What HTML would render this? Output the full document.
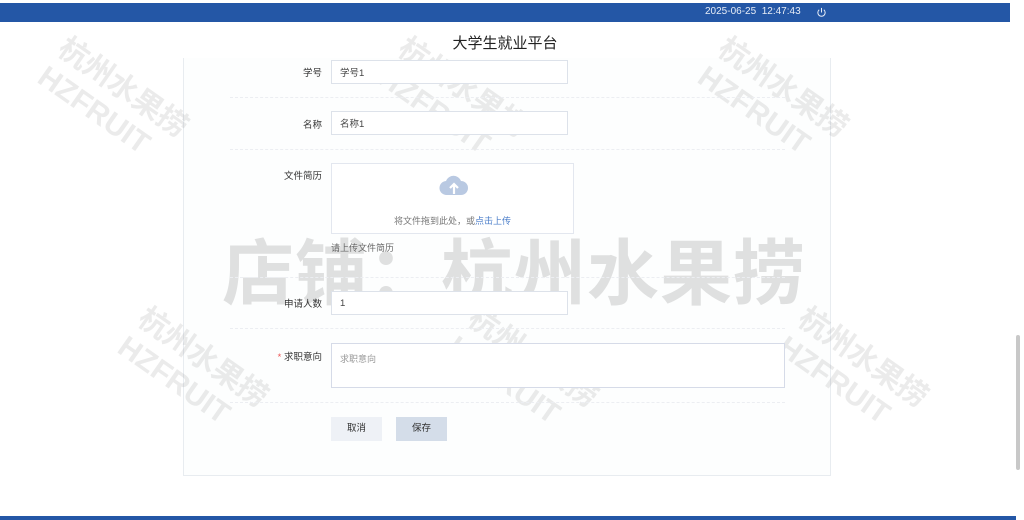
<!DOCTYPE html>
<html><head><meta charset="utf-8"><style>
*{box-sizing:border-box;margin:0;padding:0}
body{width:1024px;height:520px;overflow:hidden;background:#fff;font-family:"Liberation Sans","Noto Sans CJK SC",sans-serif;position:relative;color:#333}
.top{position:absolute;left:0;top:3px;width:1010px;height:19px;background:#2457a6}
.top span{position:absolute;top:3px;color:#e6ecf6;font-size:10px}
.title{position:absolute;top:32px;left:0;width:1010px;text-align:center;font-size:15px;color:#222}
.card{position:absolute;left:183px;top:58px;width:648px;height:418px;border:1px solid #e8ecf0;border-top:none;background:#fdfefe}
.lab{position:absolute;font-size:9.5px;color:#333;text-align:right;width:80px}
.inp{position:absolute;border:1px solid #dde2ea;background:#fff;font-size:9.5px;color:#444;padding-left:8px;display:flex;align-items:center}
.sep{position:absolute;left:230px;width:555px;border-top:1px dashed #eceef2}
.btn{position:absolute;font-size:9.5px;text-align:center;line-height:24px;width:51px;height:24px}
.wm{position:absolute;color:rgba(120,120,120,.22);font-weight:bold;white-space:nowrap}
.scroll{position:absolute;left:1016px;top:335px;width:4px;height:135px;background:#c8c8c8;border-radius:2px}
.bottom{position:absolute;left:0;top:516px;width:1016px;height:4px;background:#2457a6}
</style></head><body>
<div class="top"><span style="left:705px">2025-06-25&nbsp;&nbsp;12:47:43</span>
<svg style="position:absolute;left:816px;top:4px" width="11" height="11" viewBox="0 0 12 12"><path d="M3.5 3A4 4 0 1 0 8.5 3" fill="none" stroke="#e6ecf6" stroke-width="1.1"/><path d="M6 1v5" stroke="#e6ecf6" stroke-width="1.1"/></svg></div>
<div class="title">大学生就业平台</div>
<div class="card"></div>
<div class="wm" style="left:222px;top:215px;font-size:72px;letter-spacing:1px">店铺：杭州水果捞</div>
<div class="wm" style="left:40px;top:60px;font-size:30px;transform:rotate(35deg);color:rgba(120,120,120,.15)">杭州水果捞<br>HZFRUIT</div>
<div class="wm" style="left:380px;top:60px;font-size:30px;transform:rotate(35deg);color:rgba(120,120,120,.15)">杭州水果捞<br>HZFRUIT</div>
<div class="wm" style="left:700px;top:60px;font-size:30px;transform:rotate(35deg);color:rgba(120,120,120,.15)">杭州水果捞<br>HZFRUIT</div>
<div class="wm" style="left:120px;top:330px;font-size:30px;transform:rotate(35deg);color:rgba(120,120,120,.15)">杭州水果捞<br>HZFRUIT</div>
<div class="wm" style="left:450px;top:330px;font-size:30px;transform:rotate(35deg);color:rgba(120,120,120,.15)">杭州水果捞<br>HZFRUIT</div>
<div class="wm" style="left:780px;top:330px;font-size:30px;transform:rotate(35deg);color:rgba(120,120,120,.15)">杭州水果捞<br>HZFRUIT</div>
<div class="lab" style="left:242px;top:65px">学号</div>
<div class="inp" style="left:331px;top:60px;width:237px;height:24px">学号1</div>
<div class="sep" style="top:97px"></div>
<div class="lab" style="left:242px;top:117px">名称</div>
<div class="inp" style="left:331px;top:111px;width:237px;height:24px">名称1</div>
<div class="sep" style="top:149px"></div>
<div class="lab" style="left:242px;top:168px">文件简历</div>
<div class="inp" style="left:331px;top:163px;width:243px;height:71px;border-color:#e3e7ef;padding:0;display:block">
<svg style="position:absolute;left:107px;top:10px" width="30" height="22" viewBox="0 0 30 22"><path d="M8 21a7 7 0 0 1-1-14 8 8 0 0 1 15 0 7 7 0 0 1 0 14z" fill="#b9c9e2"/><path d="M15 20v-9M11 14l4-4 4 4" stroke="#fff" stroke-width="2.2" fill="none"/></svg>
<div style="position:absolute;top:50px;width:100%;text-align:center;font-size:9px;color:#777">将文件拖到此处，或<span style="color:#4a7dc9">点击上传</span></div></div>
<div style="position:absolute;left:331px;top:241px;font-size:9px;color:#666">请上传文件简历</div>
<div class="sep" style="top:277px"></div>
<div class="lab" style="left:242px;top:296px">申请人数</div>
<div class="inp" style="left:331px;top:291px;width:237px;height:24px">1</div>
<div class="sep" style="top:328px"></div>
<div class="lab" style="left:242px;top:349px"><span style="color:#e55">* </span>求职意向</div>
<div class="inp" style="left:331px;top:343px;width:454px;height:45px;border-color:#d6dbe8;color:#999;font-size:9px;padding-top:8px;display:block">求职意向</div>
<div class="sep" style="top:402px"></div>
<div class="btn" style="left:331px;top:417px;background:#eef1f6">取消</div>
<div class="btn" style="left:396px;top:417px;background:#d4dde9">保存</div>
<div class="scroll"></div>
<div class="bottom"></div>
</body></html>
